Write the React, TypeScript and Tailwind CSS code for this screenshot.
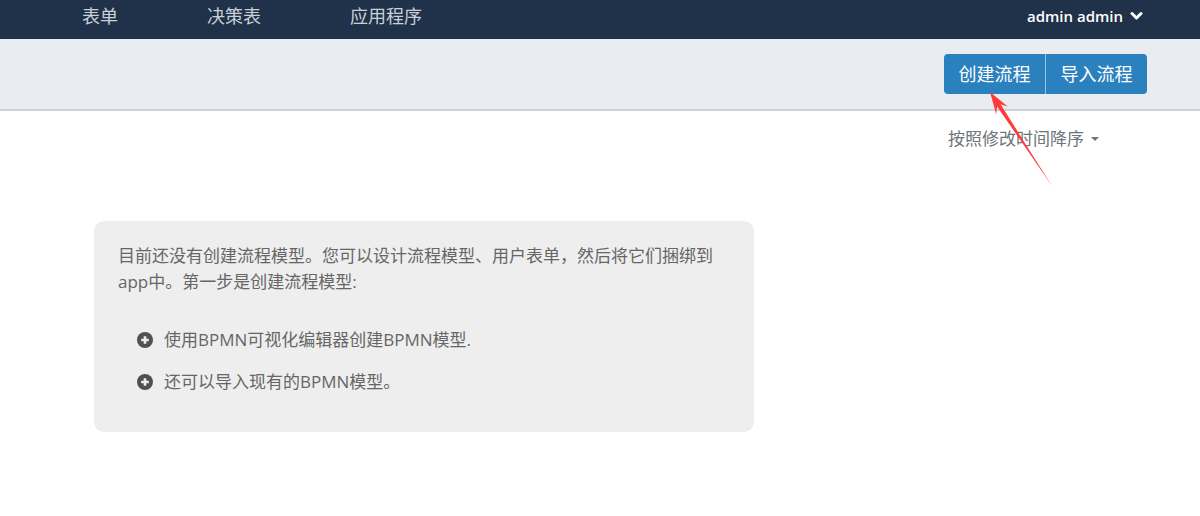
const font = { fontFamily: '"Open Sans", "Noto Sans CJK SC", sans-serif' };

function PlusCircle() {
  return (
    <svg width="16" height="16" viewBox="0 0 16 16" className="shrink-0">
      <circle cx="8" cy="8" r="8" fill="#505050" />
      <path d="M8 4.2 V11.8 M4.2 8 H11.8" stroke="#eeeeee" strokeWidth="2.6" />
    </svg>
  );
}

export default function App() {
  const navItems = ["表单", "决策表", "应用程序"];

  return (
    <div className="relative w-[1200px] h-[516px] bg-white overflow-hidden" style={font}>
      {/* top nav */}
      <div className="h-[39px] bg-[#1f3249] flex items-center justify-between pl-[82px] pr-[57px] pb-[7px]">
        <div className="flex gap-[89px]">
          {navItems.map((item) => (
            <span key={item} className="text-[18px] leading-[26px] text-[#c9d0d7]">
              {item}
            </span>
          ))}
        </div>
        <div className="flex items-center gap-[7px] text-white text-[15px] font-semibold">
          <span>admin admin</span>
          <svg width="13" height="10" viewBox="0 0 13 10">
            <path d="M2 2.5 L6.5 7 L11 2.5" fill="none" stroke="white" strokeWidth="3" strokeLinecap="round" strokeLinejoin="round" />
          </svg>
        </div>
      </div>

      {/* toolbar */}
      <div className="h-[72px] bg-[#e9ecf0] border-b-2 border-[#cfd2d5] flex items-center justify-end pr-[53px]">
        <div className="flex rounded-[4px] overflow-hidden">
          <button className="h-[40px] w-[102px] bg-[#2a81be] text-white text-[18px] border-r border-[#9cc3e0]">
            创建流程
          </button>
          <button className="h-[40px] w-[101px] bg-[#2a81be] text-white text-[18px]">
            导入流程
          </button>
        </div>
      </div>

      {/* sort */}
      <div className="flex justify-end pr-[101px] mt-[15px]">
        <div className="flex items-center gap-[7px] text-[17px] leading-[26px] text-[#6f737a]">
          <span>按照修改时间降序</span>
          <span className="w-0 h-0 border-l-[4px] border-r-[4px] border-t-[4px] border-l-transparent border-r-transparent border-t-[#6f737a]" />
        </div>
      </div>

      {/* empty state */}
      <div className="ml-[94px] mt-[69px] w-[660px] bg-[#eeeeee] rounded-[10px] pl-[24px] pr-[20px] pt-[22px] pb-[37px] text-[#666666]">
        <p className="text-[17px] leading-[26px] whitespace-nowrap">
          目前还没有创建流程模型。您可以设计流程模型、用户表单，然后将它们捆绑到
          <br />
          app中。第一步是创建流程模型:
        </p>
        <ul className="mt-[32px] pl-[19px] flex flex-col gap-[16px] text-[17px] leading-[26px]">
          <li className="flex items-center gap-[11px]">
            <PlusCircle />
            <span>使用BPMN可视化编辑器创建BPMN模型.</span>
          </li>
          <li className="flex items-center gap-[11px]">
            <PlusCircle />
            <span>还可以导入现有的BPMN模型。</span>
          </li>
        </ul>
      </div>

      {/* annotation arrow */}
      <svg
        className="absolute left-0 top-0 pointer-events-none"
        width="1200"
        height="516"
        viewBox="0 0 1200 516"
      >
        <polygon
          points="990,92 1007.8,106.5 1000.5,104.3 1052,186 997.1,106.5 996.2,114.3"
          fill="#ff3a3a"
        />
      </svg>
    </div>
  );
}
